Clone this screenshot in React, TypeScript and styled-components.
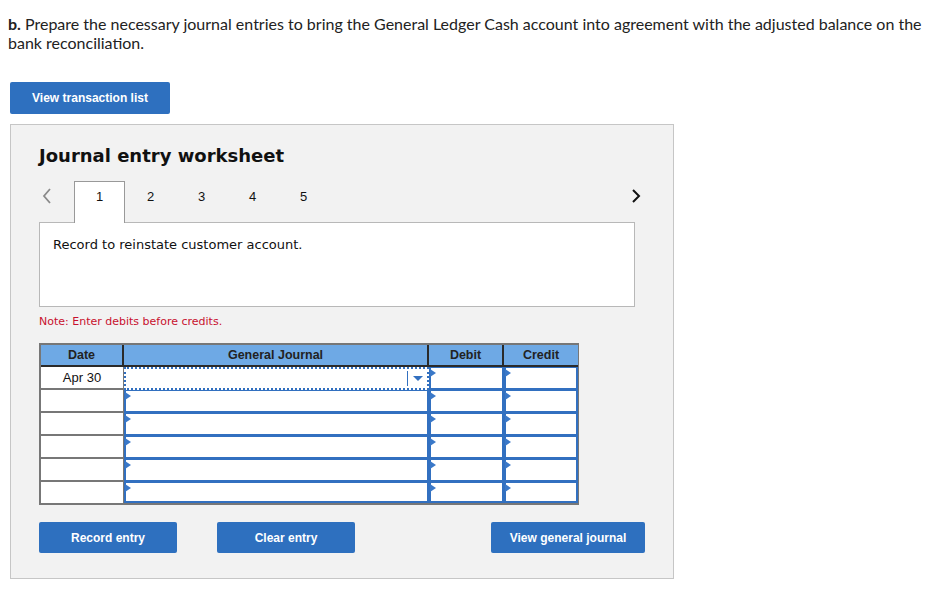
import styled, { createGlobalStyle, css } from "styled-components";

const GlobalStyle = createGlobalStyle`
  html, body {
    margin: 0;
    padding: 0;
    background: #ffffff;
  }
  * {
    box-sizing: border-box;
  }
`;

const Page = styled.div`
  padding: 14px 8px 0 10px;
  width: 934px;
  height: 601px;
  font-family: "Lato", "Liberation Sans", sans-serif;
`;

const Question = styled.p`
  margin: 0 0 0 -2px;
  font-size: 16px;
  line-height: 19px;
  color: #222;
  b {
    font-weight: 700;
  }
`;

const BlueButton = styled.button<{ $w: number }>`
  width: ${(p) => p.$w}px;
  height: 31px;
  border: none;
  border-radius: 2px;
  background: #2e70bf;
  color: #ffffff;
  font-family: "Liberation Sans", Arial, sans-serif;
  font-weight: 700;
  font-size: 12px;
  cursor: pointer;
  padding: 0;
`;

const TopButton = styled(BlueButton)`
  display: block;
  margin-top: 30px;
  height: 32px;
`;

const Panel = styled.div`
  margin-top: 10px;
  width: 664px;
  height: 455px;
  background: #f2f2f2;
  border: 1px solid #c6c6c6;
  padding: 20px 28px 0 28px;
`;

const Title = styled.h2`
  margin: 0;
  font-family: "DejaVu Sans", Verdana, sans-serif;
  font-weight: 700;
  font-size: 18px;
  line-height: 22px;
  color: #111;
`;

const TabRow = styled.div`
  display: flex;
  align-items: stretch;
  height: 41px;
  margin-top: 14px;
  width: 606px;
  position: relative;
  z-index: 1;
`;

const Chevron = styled.span<{ $right?: boolean }>`
  display: flex;
  align-items: flex-start;
  padding-top: 7px;
  width: ${(p) => (p.$right ? "auto" : "35px")};
  margin-left: ${(p) => (p.$right ? "auto" : "0")};
  padding-left: ${(p) => (p.$right ? "0" : "3px")};
  margin-right: ${(p) => (p.$right ? "4px" : "0")};
  svg {
    display: block;
  }
`;

const Tab = styled.div<{ $active?: boolean }>`
  width: 51px;
  display: flex;
  align-items: flex-start;
  justify-content: center;
  padding-top: 8px;
  font-family: "Liberation Sans", Arial, sans-serif;
  font-size: 13px;
  color: #111;
  ${(p) =>
    p.$active &&
    css`
      width: 51px;
      background: #ffffff;
      border: 1px solid #999;
      border-bottom: none;
      margin-bottom: -1px;
      padding-top: 7px;
    `}
`;

const Description = styled.div`
  width: 596px;
  height: 85px;
  background: #ffffff;
  border: 1px solid #b8b8b8;
  padding: 14px 13px;
  font-family: "DejaVu Sans", Verdana, sans-serif;
  font-size: 13px;
  color: #111;
`;

const Note = styled.p`
  margin: 8px 0 0 0;
  font-family: "DejaVu Sans", Verdana, sans-serif;
  font-size: 11px;
  line-height: 13px;
  color: #c8102e;
`;

const Grid = styled.div`
  margin-top: 15px;
  width: 540px;
  display: grid;
  grid-template-columns: 83px 305px 75px 74px;
  grid-template-rows: 22px repeat(5, 23px) 21px;
  border: 2px solid #777;
  border-right-width: 1px;
  background: #777;
  font-family: "Liberation Sans", Arial, sans-serif;
  font-size: 13px;
`;

const HeadCell = styled.div<{ $last?: boolean }>`
  background: #6ea9e5;
  color: #222;
  font-weight: 700;
  font-size: 12.5px;
  display: flex;
  align-items: center;
  justify-content: center;
  border-right: ${(p) => (p.$last ? "none" : "2px solid #2a2a2a")};
  border-bottom: 2px solid #2a2a2a;
`;

const DateCell = styled.div`
  background: #ffffff;
  display: flex;
  align-items: center;
  justify-content: center;
  color: #111;
  border-bottom: 2px solid #777;
  border-right: 1px solid #777;
  &:nth-last-child(4) {
    border-bottom: none;
  }
`;

const InputCell = styled.div<{ $focus?: boolean }>`
  position: relative;
  background: #ffffff;
  border: 2px solid #3270c0;
  border-top-width: 1px;
  ${(p) =>
    p.$focus &&
    css`
      border: 2px dotted #3270c0;
    `}
  &::before {
    content: "";
    position: absolute;
    left: -1px;
    top: 1px;
    border-left: 6px solid #3a78c8;
    border-top: 4px solid transparent;
    border-bottom: 4px solid transparent;
    display: ${(p) => (p.$focus ? "none" : "block")};
  }
`;

const Dropdown = styled.span`
  position: absolute;
  right: 0;
  top: 2px;
  bottom: 2px;
  width: 20px;
  border-left: 1px solid #3270c0;
  display: flex;
  align-items: center;
  justify-content: center;
  &::after {
    content: "";
    border-top: 5px solid #3270c0;
    border-left: 5px solid transparent;
    border-right: 5px solid transparent;
  }
`;

const ActionRow = styled.div`
  display: flex;
  width: 606px;
  gap: 40px;
  margin-top: 17px;
`;

const Spacer = styled.div`
  flex: 1;
`;

const rows = [0, 1, 2, 3, 4, 5];

export default function App() {
  return (
    <Page>
      <GlobalStyle />
      <Question>
        <b>b.</b> Prepare the necessary journal entries to bring the General Ledger Cash account into agreement with the
        adjusted balance on the bank reconciliation.
      </Question>
      <TopButton $w={160}>View transaction list</TopButton>
      <Panel>
        <Title>Journal entry worksheet</Title>
        <TabRow>
          <Chevron>
            <svg width="10" height="16" viewBox="0 0 10 16">
              <path d="M8 1 L2 8 L8 15" fill="none" stroke="#8a8a8a" strokeWidth="1.8" />
            </svg>
          </Chevron>
          <Tab $active>1</Tab>
          <Tab>2</Tab>
          <Tab>3</Tab>
          <Tab>4</Tab>
          <Tab>5</Tab>
          <Chevron $right>
            <svg width="10" height="16" viewBox="0 0 10 16">
              <path d="M2 2 L8 8 L2 14" fill="none" stroke="#111" strokeWidth="2" />
            </svg>
          </Chevron>
        </TabRow>
        <Description>Record to reinstate customer account.</Description>
        <Note>Note: Enter debits before credits.</Note>
        <Grid>
          <HeadCell>Date</HeadCell>
          <HeadCell>General Journal</HeadCell>
          <HeadCell>Debit</HeadCell>
          <HeadCell $last>Credit</HeadCell>
          {rows.map((r) => [
            <DateCell key={`d${r}`}>{r === 0 ? "Apr 30" : ""}</DateCell>,
            <InputCell key={`g${r}`} $focus={r === 0}>
              {r === 0 && <Dropdown />}
            </InputCell>,
            <InputCell key={`db${r}`} />,
            <InputCell key={`c${r}`} />,
          ])}
        </Grid>
        <ActionRow>
          <BlueButton $w={138}>Record entry</BlueButton>
          <BlueButton $w={138}>Clear entry</BlueButton>
          <Spacer />
          <BlueButton $w={154}>View general journal</BlueButton>
        </ActionRow>
      </Panel>
    </Page>
  );
}
